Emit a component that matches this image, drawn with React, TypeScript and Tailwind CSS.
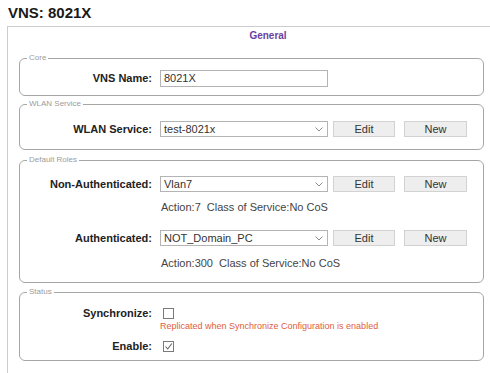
import type { ReactNode } from "react"

function Legend({ children }: { children: ReactNode }) {
  return (
    <legend className="ml-[7px] px-[2px] text-[8px] leading-[10px] text-[#9c9c9c]">
      {children}
    </legend>
  )
}

function Label({ children }: { children: ReactNode }) {
  return (
    <div className="w-[132px] shrink-0 text-right text-[11px] font-bold text-[#222]">{children}</div>
  )
}

function Select({ value }: { value: string }) {
  return (
    <div className="ml-[8px] flex h-[16px] w-[168px] items-center justify-between border border-[#b4b4b4] bg-white pl-[3px] pr-[4px] text-[11px] text-[#333]">
      <span>{value}</span>
      <svg width="8" height="5" viewBox="0 0 8 5" className="text-[#8a8a8a]">
        <path d="M0.5 0.5 L4 4 L7.5 0.5" fill="none" stroke="currentColor" strokeWidth="1" />
      </svg>
    </div>
  )
}

function Btn({ children, className }: { children: ReactNode; className: string }) {
  return (
    <div
      className={`flex h-[16px] w-[62px] items-center justify-center border border-[#d2d2d2] bg-[#eeeeee] text-[11px] text-[#333] ${className}`}
    >
      {children}
    </div>
  )
}

function Checkbox({ checked }: { checked?: boolean }) {
  return (
    <div className="ml-[11px] flex h-[11px] w-[11px] items-center justify-center border border-[#7a7a7a] bg-white">
      {checked && (
        <svg width="9" height="9" viewBox="0 0 9 9">
          <path d="M1.5 4.5 L3.7 7 L7.8 1.5" fill="none" stroke="#666" strokeWidth="1.1" />
        </svg>
      )}
    </div>
  )
}

export default function App() {
  return (
    <div className="relative h-[373px] w-[490px] overflow-hidden bg-white font-['Liberation_Sans',Arial,sans-serif]">
      <h1 className="h-[26px] pl-[8px] text-[15px] font-bold leading-[26px] text-[#1a1a1a]">VNS: 8021X</h1>

      <div className="ml-[7px] h-[400px] w-[521px] border-l border-t border-[#cccccc]">
        <div className="h-[17px] text-center text-[10px] font-bold leading-[17px] text-[#6b3f9e]">General</div>

        {/* Core */}
        <fieldset className="ml-[11px] mt-[9px] w-[465px] rounded-[6px] border border-[#a6a6a6] pb-[8px] pt-[7px]">
          <Legend>Core</Legend>
          <div className="flex h-[17px] items-center">
            <Label>VNS Name:</Label>
            <div className="ml-[8px] flex h-[17px] w-[168px] items-center border border-[#b4b4b4] pl-[3px] text-[11px] text-[#333]">
              8021X
            </div>
          </div>
        </fieldset>

        {/* WLAN Service */}
        <fieldset className="ml-[11px] mt-[3px] w-[465px] rounded-[6px] border border-[#a6a6a6] pb-[12px] pt-[12px]">
          <Legend>WLAN Service</Legend>
          <div className="flex h-[16px] items-center">
            <Label>WLAN Service:</Label>
            <Select value="test-8021x" />
            <Btn className="ml-[5px]">Edit</Btn>
            <Btn className="ml-[9px] w-[63px]">New</Btn>
          </div>
        </fieldset>

        {/* Default Roles */}
        <fieldset className="ml-[11px] mt-[5px] w-[465px] rounded-[6px] border border-[#a6a6a6] pb-[12px] pt-[11px]">
          <Legend>Default Roles</Legend>
          <div className="flex h-[16px] items-center">
            <Label>Non-Authenticated:</Label>
            <Select value="Vlan7" />
            <Btn className="ml-[5px]">Edit</Btn>
            <Btn className="ml-[9px] w-[63px]">New</Btn>
          </div>
          <div className="mt-[8px] h-[14px] pl-[141px] text-[11px] leading-[14px] text-[#444]">
            Action:7&nbsp;&nbsp;Class of Service:No CoS
          </div>
          <div className="mt-[16px] flex h-[16px] items-center">
            <Label>Authenticated:</Label>
            <Select value="NOT_Domain_PC" />
            <Btn className="ml-[5px]">Edit</Btn>
            <Btn className="ml-[9px] w-[63px]">New</Btn>
          </div>
          <div className="mt-[10px] h-[14px] pl-[141px] text-[11px] leading-[14px] text-[#444]">
            Action:300&nbsp;&nbsp;Class of Service:No CoS
          </div>
        </fieldset>

        {/* Status */}
        <fieldset className="ml-[11px] mt-[4px] w-[465px] rounded-[6px] border border-[#a6a6a6] pb-[7px] pt-[9px]">
          <Legend>Status</Legend>
          <div className="flex h-[14px] items-center">
            <Label>Synchronize:</Label>
            <Checkbox />
          </div>
          <div className="h-[12px] pl-[140px] text-[9px] leading-[12px] text-[#e0603e]">
            Replicated when Synchronize Configuration is enabled
          </div>
          <div className="mt-[7px] flex h-[14px] items-center">
            <Label>Enable:</Label>
            <Checkbox checked />
          </div>
        </fieldset>
      </div>
    </div>
  )
}
